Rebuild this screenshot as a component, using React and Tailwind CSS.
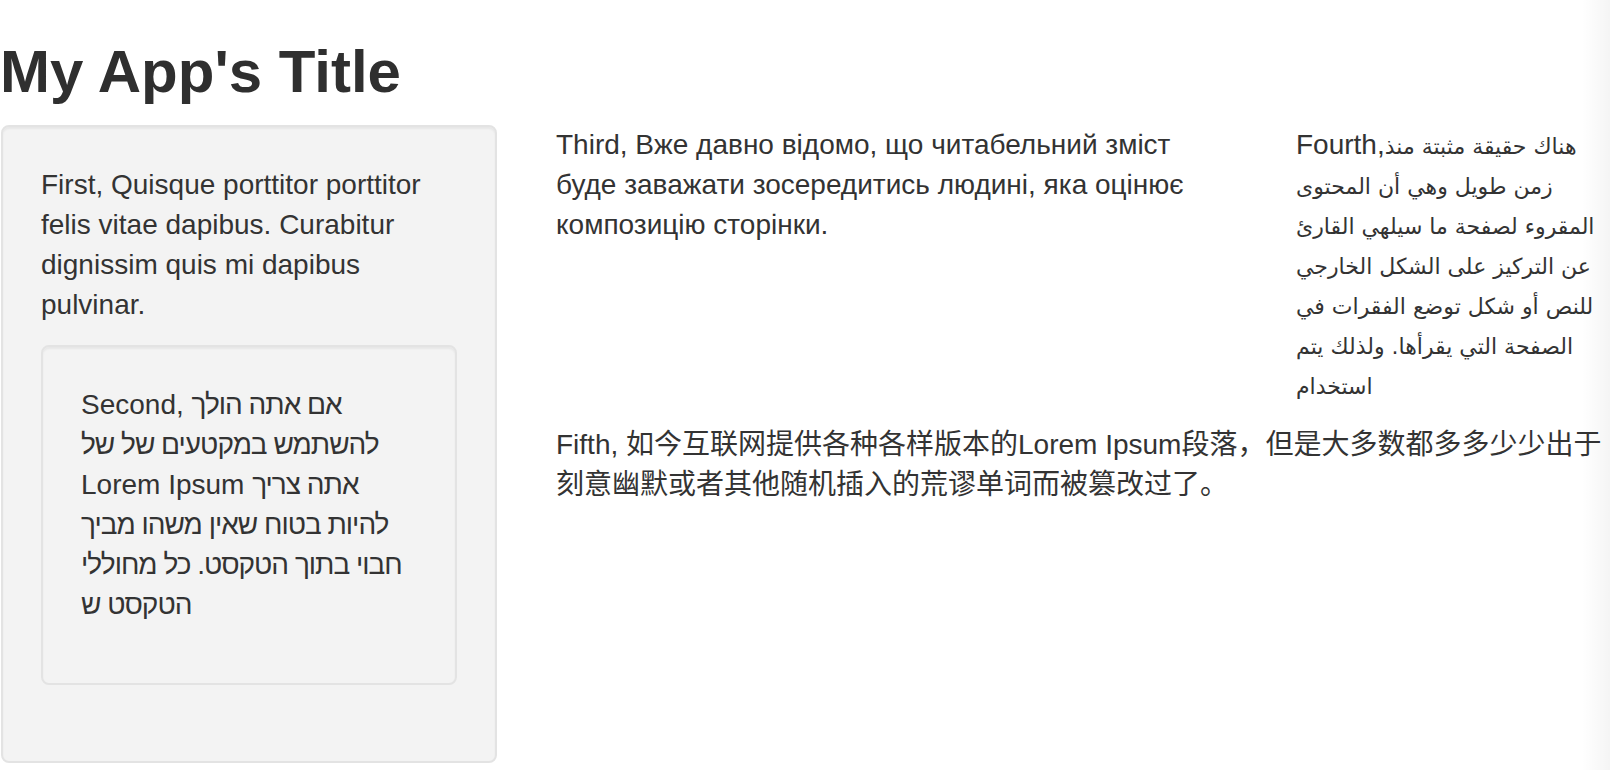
export default function App() {
  return (
    <div className="relative h-[770px] overflow-hidden bg-white font-['Liberation_Sans','DejaVu_Sans','Noto_Sans_CJK_SC',sans-serif] text-[28px] leading-[40px] text-[#333]">
      <h1 className="m-0 pt-[39px] pb-[20px] text-[60px] font-bold leading-[66px] text-[#2f2f2f]">My App's Title</h1>

      <div className="flex">
        {/* sidebar */}
        <div className="w-[527px] shrink-0 pl-px pr-[30px]">
          <div className="rounded-lg border-2 border-[#e3e3e3] bg-[#f3f3f3] p-[38px] shadow-[inset_0_2px_2px_rgba(0,0,0,0.05)]">
            <p className="mb-5">First, Quisque porttitor porttitor felis vitae dapibus. Curabitur dignissim quis mi dapibus pulvinar.</p>
            <div className="mb-[38px] rounded-lg border-2 border-[#e3e3e3] bg-[#f3f3f3] p-[38px] shadow-[inset_0_2px_2px_rgba(0,0,0,0.05)]">
              <p className="mb-5">
                Second, <span className="tracking-[-1px]">אם אתה הולך להשתמש במקטעים של של</span> Lorem Ipsum{' '}
                <span className="tracking-[-1px]">אתה צריך להיות בטוח שאין משהו מביך חבוי בתוך הטקסט. כל מחוללי הטקסט ש</span>
              </p>
            </div>
          </div>
        </div>

        {/* main panel */}
        <div className="w-[1110px] shrink-0 px-[29px]">
          <div className="flex gap-[58px]">
            <div className="w-[682px] shrink-0">
              <p className="mb-5">Third, Вже давно відомо, що читабельний зміст буде заважати зосередитись людині, яка оцінює композицію сторінки.</p>
            </div>
            <div className="w-[312px] shrink-0">
              <p className="mb-5">
                Fourth,
                <span className="font-['DejaVu_Sans',sans-serif] text-[22px] leading-none">
                  هناك حقيقة مثبتة منذ زمن طويل وهي أن المحتوى المقروء لصفحة ما سيلهي القارئ عن التركيز على الشكل الخارجي للنص أو شكل توضع الفقرات في الصفحة التي يقرأها. ولذلك يتم استخدام
                </span>
              </p>
            </div>
          </div>
          <p className="mb-5">Fifth, 如今互联网提供各种各样版本的Lorem Ipsum段落，但是大多数都多多少少出于刻意幽默或者其他随机插入的荒谬单词而被篡改过了。</p>
        </div>
      </div>

      <div className="pointer-events-none absolute top-0 right-0 h-full w-[28px] bg-linear-to-r from-transparent to-black/[0.04]" />
    </div>
  );
}
